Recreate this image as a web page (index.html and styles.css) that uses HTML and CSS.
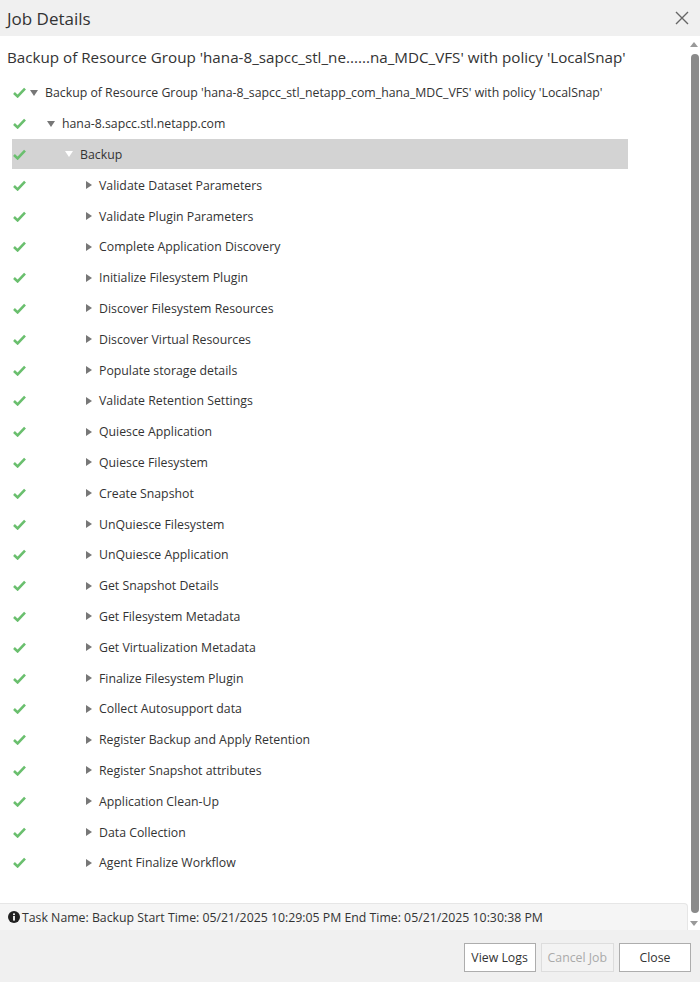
FILE: index.html
```html
<!DOCTYPE html>
<html lang="en">
<head>
  <meta charset="UTF-8" />
  <title>Job Details</title>
  <link rel="stylesheet" href="styles.css">
</head>
<body>
  <div class="dialog">
    <header class="dlg-head">
      <span class="dlg-title">Job Details</span>
      <svg class="close-x" width="14" height="14" viewBox="0 0 14 14">
        <path d="M1 1 L13 13 M13 1 L1 13" stroke="#666" stroke-width="1.4" fill="none"/>
      </svg>
    </header>

    <div class="dlg-main">
      <div class="content">
        <div class="job-heading">Backup of Resource Group 'hana-8_sapcc_stl_ne......na_MDC_VFS' with policy 'LocalSnap'</div>

        <div class="tree" id="tree"></div>

        <div class="info-bar">
          <svg class="info-ico" width="12" height="12" viewBox="0 0 12 12">
            <circle cx="6" cy="6" r="6" fill="#222"/>
            <rect x="5.1" y="5" width="1.8" height="4.6" fill="#fff"/>
            <circle cx="6" cy="3.2" r="1.05" fill="#fff"/>
          </svg>
          Task Name: Backup Start Time: 05/21/2025 10:29:05 PM End Time: 05/21/2025 10:30:38 PM
        </div>
      </div>

      <div class="scrollbar">
        <span class="sb-up"></span>
        <span class="sb-thumb"></span>
        <span class="sb-down"></span>
      </div>
    </div>

    <footer class="dlg-foot">
      <button class="btn">View Logs</button>
      <button class="btn" disabled>Cancel Job</button>
      <button class="btn btn-close">Close</button>
    </footer>
  </div>

  <script>
    const steps = [
      "Validate Dataset Parameters",
      "Validate Plugin Parameters",
      "Complete Application Discovery",
      "Initialize Filesystem Plugin",
      "Discover Filesystem Resources",
      "Discover Virtual Resources",
      "Populate storage details",
      "Validate Retention Settings",
      "Quiesce Application",
      "Quiesce Filesystem",
      "Create Snapshot",
      "UnQuiesce Filesystem",
      "UnQuiesce Application",
      "Get Snapshot Details",
      "Get Filesystem Metadata",
      "Get Virtualization Metadata",
      "Finalize Filesystem Plugin",
      "Collect Autosupport data",
      "Register Backup and Apply Retention",
      "Register Snapshot attributes",
      "Application Clean-Up",
      "Data Collection",
      "Agent Finalize Workflow"
    ];

    const rows = [
      { text: "Backup of Resource Group 'hana-8_sapcc_stl_netapp_com_hana_MDC_VFS' with policy 'LocalSnap'", level: 0, open: true },
      { text: "hana-8.sapcc.stl.netapp.com", level: 1, open: true },
      { text: "Backup", level: 2, open: true, selected: true }
    ];
    steps.forEach(s => rows.push({ text: s, level: 3, open: false }));

    const checkSvg = '<svg class="check" width="13" height="11" viewBox="0 0 13 11">' +
      '<path d="M1 6 L4.6 9.4 L12 1.6" stroke="#6abf6e" stroke-width="2.6" fill="none"/></svg>';

    const tree = document.getElementById("tree");
    rows.forEach(r => {
      let row = document.createElement("div");
      row.className = "tree-row lvl" + r.level + (r.selected ? " selected" : "");
      row.innerHTML = checkSvg +
        '<span class="toggle ' + (r.open ? "open" : "closed") + '"></span>' +
        '<span class="label"></span>';
      row.querySelector(".label").textContent = r.text;
      tree.appendChild(row);
    });
  </script>
</body>
</html>
```

FILE: styles.css
```css
html, body {
  margin: 0;
  padding: 0;
  height: 100%;
}
body {
  font-family: 'Open Sans', 'Noto Sans', sans-serif;
  color: #333;
  background: #fff;
}
.dialog {
  display: flex;
  flex-direction: column;
  height: 982px;
  width: 700px;
}
.dlg-head {
  height: 36px;
  background: #f0f0f0;
  display: flex;
  align-items: center;
  justify-content: space-between;
  padding: 0 11px 0 7px;
  box-sizing: border-box;
  flex-shrink: 0;
}
.dlg-title {
  font-size: 17px;
  color: #333;
}
.close-x {
  display: block;
}
.dlg-main {
  flex: 1;
  display: flex;
  min-height: 0;
}
.content {
  flex: 1;
  display: flex;
  flex-direction: column;
  min-width: 0;
}
.job-heading {
  font-size: 15.2px;
  line-height: 22px;
  padding: 10px 7px 9px;
  white-space: nowrap;
}
.tree {
  flex: 1;
  padding-left: 12px;
}
.tree-row {
  width: 616px;
  height: 30.8px;
  display: flex;
  align-items: center;
  font-size: 12.3px;
  padding-top: 1px;
  box-sizing: border-box;
  white-space: nowrap;
}
.tree-row.selected {
  background: #d3d3d3;
}
.check {
  margin-left: 1px;
  flex-shrink: 0;
}
.toggle {
  width: 0;
  height: 0;
  flex-shrink: 0;
}
.toggle.open {
  border-left: 4px solid transparent;
  border-right: 4px solid transparent;
  border-top: 6px solid #777;
}
.toggle.closed {
  border-top: 4px solid transparent;
  border-bottom: 4px solid transparent;
  border-left: 6px solid #777;
}
.selected .toggle.open {
  border-top-color: #fff;
}
.lvl0 .toggle { margin-left: 4px; margin-right: 7px; }
.lvl1 .toggle { margin-left: 21px; margin-right: 7px; }
.lvl2 .toggle { margin-left: 39px; margin-right: 7px; }
.lvl3 .toggle { margin-left: 60px; margin-right: 7px; }
.info-bar {
  height: 27px;
  display: flex;
  align-items: center;
  gap: 2px;
  padding-left: 8px;
  background: #f5f5f5;
  border-top: 1px solid #e6e6e6;
  border-right: 1px solid #e6e6e6;
  border-radius: 0 4px 0 0;
  box-sizing: border-box;
  font-size: 12.3px;
  color: #333;
  white-space: nowrap;
}
.info-ico {
  flex-shrink: 0;
}
.scrollbar {
  width: 12px;
  display: flex;
  flex-direction: column;
  align-items: center;
  padding: 6px 0 4px;
  box-sizing: border-box;
  background: #fff;
}
.sb-up, .sb-down {
  width: 0;
  height: 0;
  border-left: 4px solid transparent;
  border-right: 4px solid transparent;
}
.sb-up {
  border-bottom: 5px solid #999;
}
.sb-down {
  border-top: 5px solid #999;
}
.sb-thumb {
  flex: 1;
  width: 8px;
  margin: 7px 0 8px 2px;
  background: #8a8a8a;
  border-radius: 4px;
}
.dlg-foot {
  height: 52px;
  background: #f0f0f0;
  display: flex;
  justify-content: flex-end;
  align-items: center;
  gap: 5px;
  padding-right: 9px;
  padding-top: 3px;
  box-sizing: border-box;
  flex-shrink: 0;
}
.btn {
  height: 29px;
  padding: 0 6px;
  min-width: 72px;
  background: #fff;
  border: 1px solid #adadad;
  font-family: 'Open Sans', 'Noto Sans', sans-serif;
  font-size: 12.3px;
  color: #333;
}
.btn:disabled {
  background: #f3f3f3;
  border-color: #ddd;
  color: #aaa;
}
```
